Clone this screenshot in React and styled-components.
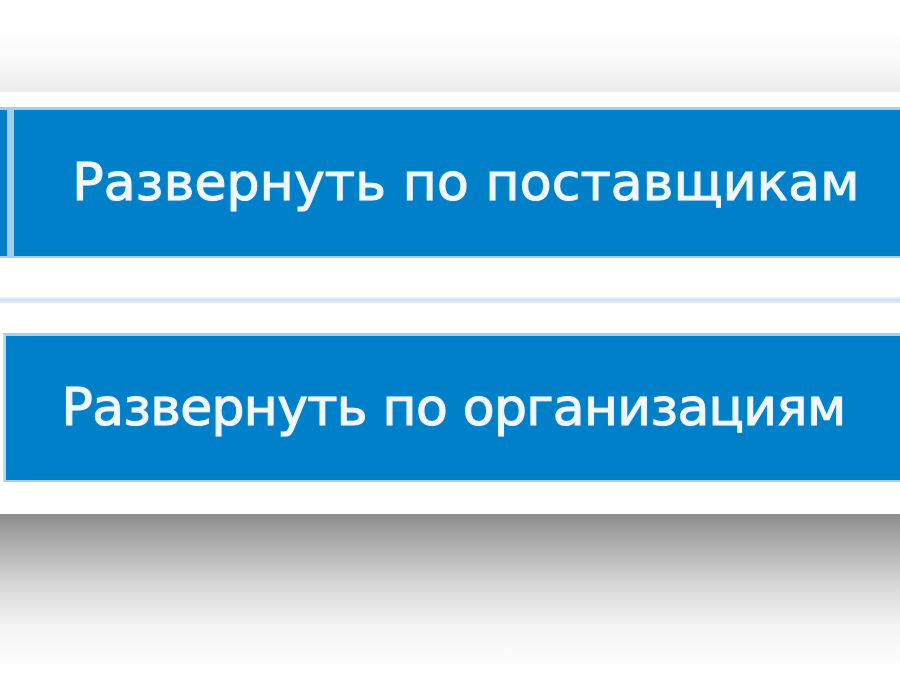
import React from "react";
import styled, { createGlobalStyle } from "styled-components";

const GlobalStyle = createGlobalStyle`
  html, body {
    margin: 0;
    padding: 0;
    background: #ffffff;
  }
  body {
    font-family: "DejaVu Sans", Verdana, sans-serif;
  }
`;

const Page = styled.div`
  width: 900px;
  height: 700px;
  overflow: hidden;
  display: flex;
  flex-direction: column;
  background: #ffffff;
`;

const TopFade = styled.div`
  margin-top: 32px;
  height: 60px;
  flex-shrink: 0;
  background: linear-gradient(to bottom, #fefefe 0%, #f9f9f9 50%, #ececec 100%);
`;

const Panel = styled.div`
  height: 422px;
  flex-shrink: 0;
  display: flex;
  flex-direction: column;
  padding-top: 15px;
  box-sizing: border-box;
  background: #ffffff;
`;

const Row = styled.div`
  display: flex;
  align-items: stretch;
  height: ${(p) => p.$h}px;
  flex-shrink: 0;
`;

const Stub = styled.div`
  width: 7px;
  flex-shrink: 0;
  background: #0080c9;
  border-top: 3px solid #a6cfee;
  border-bottom: 2px solid #a6cfee;
`;

const Divider = styled.div`
  width: 7px;
  flex-shrink: 0;
  background: #a3cdee;
`;

const Margin = styled.div`
  width: ${(p) => p.$w}px;
  flex-shrink: 0;
`;

const ActionButton = styled.button`
  width: ${(p) => p.$w}px;
  flex-shrink: 0;
  margin: 0;
  padding: 0;
  display: flex;
  align-items: center;
  justify-content: center;
  background: #0080c9;
  border: none;
  border-top: 3px solid #a6cfee;
  border-bottom: 2px solid #a6cfee;
  border-left: ${(p) => (p.$edge ? "3px solid #b9dbf2" : "none")};
  box-sizing: border-box;
  color: #f1f8fd;
  font-family: "DejaVu Sans", Verdana, sans-serif;
  font-size: 52px;
  line-height: 1;
  letter-spacing: ${(p) => p.$track || 0}px;
  -webkit-text-stroke: 1.1px #e9f3fb;
  text-shadow: 0 0 1.5px rgba(220, 236, 250, 0.6);
  white-space: nowrap;
  cursor: pointer;
`;

const Label = styled.span`
  display: block;
  transform: translateY(${(p) => p.$dy}px);
`;

const Separator = styled.div`
  height: 6px;
  flex-shrink: 0;
  background: linear-gradient(to bottom, #eef5fd 0%, #c6dcf9 50%, #e2eefc 100%);
`;

const Space = styled.div`
  height: ${(p) => p.$h}px;
  flex-shrink: 0;
`;

const BottomShadow = styled.div`
  height: 150px;
  flex-shrink: 0;
  background: linear-gradient(
    to bottom,
    #8c8c8c 0%,
    #a6a6a6 15%,
    #c4c4c4 35%,
    #e0e0e0 55%,
    #f3f3f3 75%,
    #fdfdfd 100%
  );
`;

export default function App() {
  return (
    <>
      <GlobalStyle />
      <Page>
        <TopFade />
        <Panel>
          <Row $h={151}>
            <Stub />
            <Divider />
            <ActionButton $w={904} $track={0.15}>
              <Label $dy={-1}>Развернуть по поставщикам</Label>
            </ActionButton>
          </Row>
          <Space $h={39} />
          <Separator />
          <Space $h={30} />
          <Row $h={149}>
            <Margin $w={3} />
            <ActionButton $w={898} $edge $track={-0.7}>
              <Label $dy={-1}>Развернуть по организациям</Label>
            </ActionButton>
          </Row>
        </Panel>
        <BottomShadow />
      </Page>
    </>
  );
}
